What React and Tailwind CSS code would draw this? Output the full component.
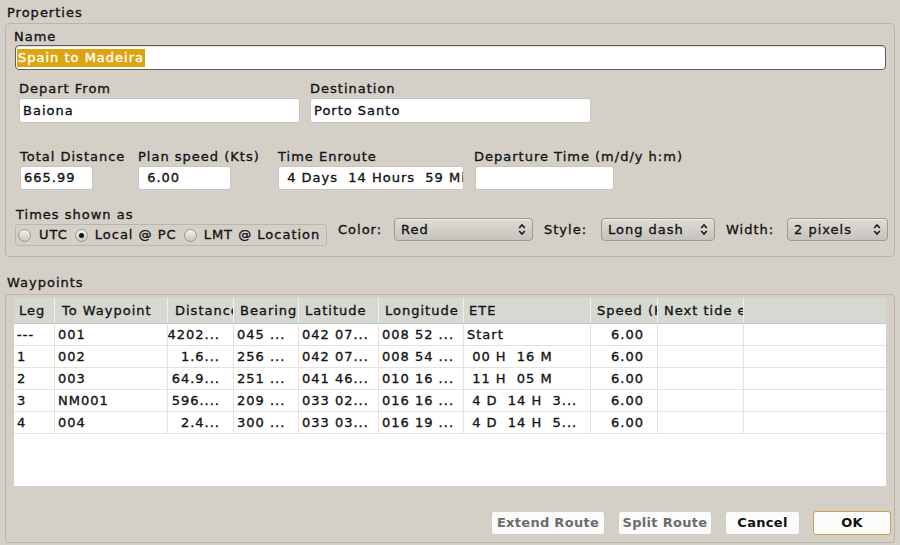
import React from "react";

const cols = "grid-cols-[41px_113px_66px_65px_80px_85px_127px_67px_86px_1fr]";

const headers = [
  "Leg",
  "To Waypoint",
  "Distance",
  "Bearing",
  "Latitude",
  "Longitude",
  "ETE",
  "Speed (Kts)",
  "Next tide event",
  "",
];

const headerPad = ["pl-[5px]", "pl-[7px]", "pl-[7px]", "pl-[6px]", "pl-[6px]", "pl-[6px]", "pl-[5px]", "pl-[6px]", "pl-[6px]", "pl-[6px]"];

const rows = [
  ["---", "001", "4202...", "045 ...", "042 07...", "008 52 ...", "Start", "6.00", "", ""],
  ["1", "002", "1.6...", "256 ...", "042 07...", "008 54 ...", " 00 H  16 M", "6.00", "", ""],
  ["2", "003", "64.9...", "251 ...", "041 46...", "010 16 ...", " 11 H  05 M", "6.00", "", ""],
  ["3", "NM001", "596....", "209 ...", "033 02...", "016 16 ...", " 4 D  14 H  3...", "6.00", "", ""],
  ["4", "004", "2.4...", "300 ...", "033 03...", "016 19 ...", " 4 D  14 H  5...", "6.00", "", ""],
];

function Chevrons() {
  return (
    <svg width="8" height="13" viewBox="0 0 8 13" className="shrink-0">
      <path d="M1.2 5 L4 2 L6.8 5" fill="none" stroke="#1a1a1a" strokeWidth="1.6" />
      <path d="M1.2 8 L4 11 L6.8 8" fill="none" stroke="#1a1a1a" strokeWidth="1.6" />
    </svg>
  );
}

function Select({ w, value }) {
  return (
    <div
      className={`${w} h-[23px] flex items-center justify-between pl-[6px] pr-[6px] rounded-[4px] border border-[#9d9a93] bg-gradient-to-b from-[#dedcd6] to-[#c6c3bc] shadow-[inset_0_1px_0_#ecebe7]`}
    >
      <span>{value}</span>
      <Chevrons />
    </div>
  );
}

function Radio({ checked }) {
  return (
    <span className="w-[13px] h-[13px] rounded-full border border-[#9a9892] bg-gradient-to-b from-[#f2f1ee] to-[#c9c7c1] flex items-center justify-center shrink-0">
      {checked && <span className="w-[5px] h-[5px] rounded-full bg-[#111]" />}
    </span>
  );
}

function TextBox({ w, value, h = "h-[25px]" }) {
  return (
    <div
      className={`${w} ${h} bg-white rounded-[3px] border border-[#c9c5bd] flex items-center pl-[3px] overflow-hidden whitespace-pre`}
    >
      {value}
    </div>
  );
}

function Button({ w, children, disabled, primary }) {
  return (
    <div
      className={`${w} h-[24px] rounded-[3px] flex items-center justify-center font-bold tracking-[0.3px] whitespace-nowrap [-webkit-text-stroke:0px] bg-[#fbfbfa] ${
        primary ? "border-[1.5px] border-[#c9a24a]" : "border border-[#cfccc5]"
      } ${disabled ? "text-[#6c6c6c]" : "text-[#111]"}`}
    >
      {children}
    </div>
  );
}

export default function App() {
  return (
    <div className="w-[900px] h-[545px] overflow-hidden bg-[#d4d0c8] font-['DejaVu_Sans',sans-serif] text-[13px] leading-[16px] tracking-[1px] text-[#141414] [-webkit-text-stroke:0.35px_#141414]">
      <div className="pt-[5px] pl-[7px] h-[21px]">Properties</div>
      <div className="mt-[2px] ml-[5px] w-[890px] h-[234px] border border-[#bab6ae] rounded-[4px] pt-[5px]">
        <div className="pl-[8px]">Name</div>
        <div className="ml-[9px] w-[871px] h-[25px] bg-white rounded-[4px] border-[1.5px] border-[#5c5c5c] shadow-[inset_0_1px_1px_rgba(0,0,0,0.15)] flex items-center pl-[1px]">
          <span className="bg-[#dea40f] text-white [-webkit-text-stroke:0.35px_#ffffff] px-[1px] leading-[18px]">
            Spain to Madeira
          </span>
        </div>

        <div className="mt-[11px] ml-[13px] flex gap-[10px]">
          <div className="w-[281px]">
            <div>Depart From</div>
            <div className="mt-[1px]">
              <TextBox w="w-[281px]" value="Baiona" />
            </div>
          </div>
          <div className="w-[281px]">
            <div>Destination</div>
            <div className="mt-[1px]">
              <TextBox w="w-[281px]" value="Porto Santo" />
            </div>
          </div>
        </div>

        <div className="mt-[26px] ml-[14px] flex gap-[10px]">
          <div className="w-[108px]">
            <div className="whitespace-nowrap">Total Distance</div>
            <div className="mt-[1px]">
              <TextBox w="w-[73px]" h="h-[24px]" value="665.99" />
            </div>
          </div>
          <div className="w-[130px]">
            <div className="whitespace-nowrap">Plan speed (Kts)</div>
            <div className="mt-[1px]">
              <TextBox w="w-[93px]" h="h-[24px]" value=" 6.00" />
            </div>
          </div>
          <div className="w-[186px]">
            <div className="whitespace-nowrap">Time Enroute</div>
            <div className="mt-[1px]">
              <TextBox w="w-[186px]" h="h-[24px]" value=" 4 Days  14 Hours  59 Minutes" />
            </div>
          </div>
          <div className="w-[140px]">
            <div className="whitespace-nowrap">Departure Time (m/d/y h:m)</div>
            <div className="mt-[1px] ml-[1px]">
              <TextBox w="w-[139px]" h="h-[24px]" value="" />
            </div>
          </div>
        </div>

        <div className="mt-[17px] flex items-start">
          <div className="ml-[9px] w-[312px]">
            <div className="ml-[1px]">Times shown as</div>
            <div className="mt-[1px] h-[22px] w-[312px] rounded-[3px] border border-[#bbb7af] flex items-center pl-[2px] gap-[7px] whitespace-nowrap">
              <span className="flex items-center gap-[8px]">
                <Radio />
                <span>UTC</span>
              </span>
              <span className="flex items-center gap-[7px]">
                <Radio checked />
                <span>Local @ PC</span>
              </span>
              <span className="flex items-center gap-[7px]">
                <Radio />
                <span>LMT @ Location</span>
              </span>
            </div>
          </div>
          <div className="ml-[11px] mt-[11px] flex items-center">
            <span className="w-[56px]">Color:</span>
            <Select w="w-[139px]" value="Red" />
            <span className="ml-[11px] w-[57px]">Style:</span>
            <Select w="w-[114px]" value="Long dash" />
            <span className="ml-[11px] w-[61px]">Width:</span>
            <Select w="w-[101px]" value="2 pixels" />
          </div>
        </div>
      </div>

      <div className="mt-[18px] pl-[7px] h-[16px]">Waypoints</div>
      <div className="mt-[3px] ml-[5px] w-[890px] h-[249px] border border-[#bab6ae] rounded-[4px] pt-[3px] pl-[8px]">
        <div className="w-[872px] h-[188px] bg-white overflow-hidden">
          <div className={`grid ${cols} h-[26px] bg-[#d6d9d1] border-b border-[#c4c6c0]`}>
            {headers.map((h, i) => (
              <div
                key={i}
                className={`h-[25px] flex items-center ${headerPad[i]} overflow-hidden whitespace-nowrap border-r border-[#eeefec] last:border-r-0`}
              >
                {h}
              </div>
            ))}
          </div>
          {rows.map((r, ri) => (
            <div key={ri} className={`grid ${cols} h-[22px]`}>
              {r.map((c, ci) => {
                const right = ci === 2 || ci === 7;
                return (
                  <div
                    key={ci}
                    className={`h-[22px] flex items-center overflow-hidden whitespace-pre border-b border-[#e2e2e2] ${
                      ci < 9 ? "border-r" : ""
                    } border-r-[#e2e2e2] ${right ? "justify-end pr-[13px]" : "pl-[3px]"}`}
                  >
                    {c}
                  </div>
                );
              })}
            </div>
          ))}
        </div>
        <div className="mt-[25px] pr-[3px] flex justify-end gap-[13px]">
          <Button w="w-[114px]" disabled>
            Extend Route
          </Button>
          <Button w="w-[94px]" disabled>
            Split Route
          </Button>
          <Button w="w-[75px]">Cancel</Button>
          <Button w="w-[78px]" primary>
            OK
          </Button>
        </div>
      </div>
    </div>
  );
}
